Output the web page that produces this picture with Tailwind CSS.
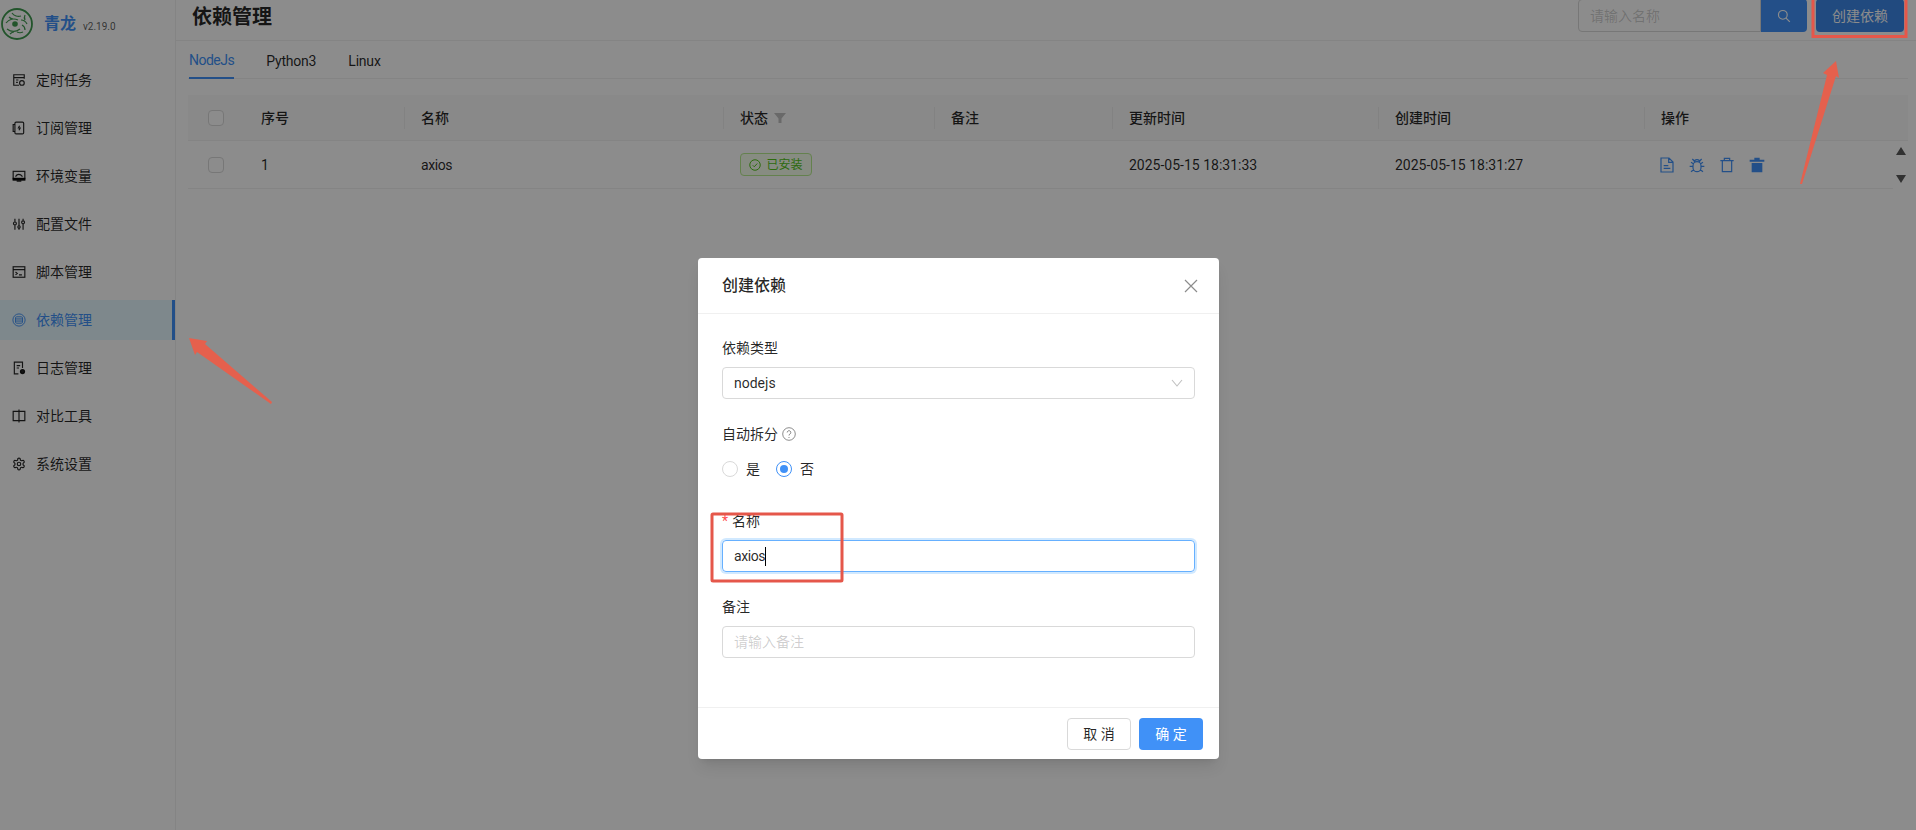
<!DOCTYPE html>
<html lang="zh-CN">
<head>
  <meta charset="UTF-8" />
  <title>依赖管理 | 青龙</title>
  <script src="https://cdn.jsdelivr.net/npm/@tailwindcss/browser@4"></script>
</head>
<body class="bg-white">
<div class="relative flex h-[830px] w-[1916px] overflow-hidden bg-white font-['Roboto','Noto_Sans_CJK_SC',sans-serif] text-sm text-black/85">

  <!-- Sidebar -->
  <aside class="h-full w-[176px] shrink-0 border-r border-[#f0f0f0]">
    <div class="flex h-[60px] items-start pt-2 pl-px">
      <svg viewBox="0 0 32 32" class="h-8 w-8 shrink-0" fill="none" stroke="#3f9a4f">
        <circle cx="16" cy="16" r="15" stroke-width="1.8"/>
        <circle cx="14" cy="16" r="2.8" fill="#3f9a4f" stroke="none"/>
        <path d="M5 15c3-4 8-5 12-3M6 21c4 3 9 3 13 0M11 5c2 3 6 4 9 3M20 12c3 0 5 2 6 4M21 17c2 1 3 3 3 5M16 24c2 1 4 1 6 0M8 9c1 1 2 2 4 2M9 26c1-1 2-2 4-2M24 7c-1 2-1 3 0 5" stroke-width="1.2"/>
      </svg>
      <span class="ml-[11px] mt-[6px] text-base leading-5 font-bold text-[#4091f7]">青龙</span>
      <span class="ml-[7px] mt-[12px] text-[10px] leading-[14px] text-black/65">v2.19.0</span>
    </div>
    <nav class="flex flex-col gap-2">
      <a class="flex h-10 items-center gap-[10px] pl-3"><svg viewBox="0 0 24 24" class="h-[14px] w-[14px]" fill="none" stroke="currentColor" stroke-width="2"><path d="M21 10V3H3v18h9M3 8h18M7 12h4M7 16h3"/><circle cx="17" cy="17" r="4"/></svg>定时任务</a>
      <a class="flex h-10 items-center gap-[10px] pl-3"><svg viewBox="0 0 24 24" class="h-[14px] w-[14px]" fill="none" stroke="currentColor" stroke-width="2"><rect x="5" y="2" width="15" height="20" rx="2"/><path d="M5 6H2v12h3M13 8l-2 4h3l-2 4"/></svg>订阅管理</a>
      <a class="flex h-10 items-center gap-[10px] pl-3"><svg viewBox="0 0 24 24" class="h-[14px] w-[14px]" fill="none" stroke="currentColor" stroke-width="2"><rect x="2" y="4" width="20" height="13"/><path d="M6 13c3-5 8-5 12 0"/><path d="M2 16h20v3H2zM8 21h8" fill="currentColor"/></svg>环境变量</a>
      <a class="flex h-10 items-center gap-[10px] pl-3"><svg viewBox="0 0 24 24" class="h-[14px] w-[14px]" fill="none" stroke="currentColor" stroke-width="2"><path d="M5 3v5M5 14v8M12 3v12M12 19v3M19 3v3M19 12v10"/><circle cx="5" cy="11" r="2.5"/><circle cx="12" cy="17" r="2"/><circle cx="19" cy="9" r="2.5"/></svg>配置文件</a>
      <a class="flex h-10 items-center gap-[10px] pl-3"><svg viewBox="0 0 24 24" class="h-[14px] w-[14px]" fill="none" stroke="currentColor" stroke-width="2"><rect x="2" y="3" width="20" height="18"/><path d="M2 8h20M6 12l3 2.5L6 17M12 17h5"/></svg>脚本管理</a>
      <a class="relative flex h-10 items-center gap-[10px] bg-[#e6f7ff] pl-3 text-[#4091f7]"><svg viewBox="0 0 24 24" class="h-[14px] w-[14px]" fill="none" stroke="currentColor" stroke-width="1.6"><circle cx="12" cy="12" r="10.5"/><rect x="6" y="6.500" width="12" height="11" rx="2"/><path d="M6.500 10.200h11M6.500 13.800h11"/></svg>依赖管理<span class="absolute top-0 right-0 h-10 w-[3px] bg-[#4091f7]"></span></a>
      <a class="flex h-10 items-center gap-[10px] pl-3"><svg viewBox="0 0 24 24" class="h-[14px] w-[14px]" fill="none" stroke="currentColor" stroke-width="2"><path d="M11 22H4V2h14v10M8 8h6M8 12h4"/><circle cx="18" cy="18" r="3.5" fill="currentColor"/></svg>日志管理</a>
      <a class="flex h-10 items-center gap-[10px] pl-3"><svg viewBox="0 0 24 24" class="h-[14px] w-[14px]" fill="none" stroke="currentColor" stroke-width="2"><path d="M2 4h20v16H2zM12 1v22M2 20h10"/></svg>对比工具</a>
      <a class="flex h-10 items-center gap-[10px] pl-3"><svg viewBox="0 0 24 24" class="h-[14px] w-[14px]" fill="none" stroke="currentColor" stroke-width="2"><path d="M12.22 2h-.44a2 2 0 0 0-2 2v.18a2 2 0 0 1-1 1.73l-.43.25a2 2 0 0 1-2 0l-.15-.08a2 2 0 0 0-2.73.73l-.22.38a2 2 0 0 0 .73 2.73l.15.1a2 2 0 0 1 1 1.72v.51a2 2 0 0 1-1 1.74l-.15.09a2 2 0 0 0-.73 2.73l.22.38a2 2 0 0 0 2.73.73l.15-.08a2 2 0 0 1 2 0l.43.25a2 2 0 0 1 1 1.73V20a2 2 0 0 0 2 2h.44a2 2 0 0 0 2-2v-.18a2 2 0 0 1 1-1.73l.43-.25a2 2 0 0 1 2 0l.15.08a2 2 0 0 0 2.73-.73l.22-.39a2 2 0 0 0-.73-2.73l-.15-.08a2 2 0 0 1-1-1.74v-.5a2 2 0 0 1 1-1.74l.15-.09a2 2 0 0 0 .73-2.73l-.22-.38a2 2 0 0 0-2.73-.73l-.15.08a2 2 0 0 1-2 0l-.43-.25a2 2 0 0 1-1-1.73V4a2 2 0 0 0-2-2z"/><circle cx="12" cy="12" r="3"/></svg>系统设置</a>
    </nav>
  </aside>

  <!-- Main -->
  <main class="flex-1">
    <header class="flex h-[41px] items-start justify-between border-b border-[#f0f0f0] pr-3 pl-4">
      <h1 class="pt-px text-xl leading-8 font-semibold">依赖管理</h1>
      <div class="flex">
        <input placeholder="请输入名称" class="-mt-px h-[33px] w-[183px] rounded-l-sm border border-[#d9d9d9] px-[11px] outline-none placeholder:text-black/20" />
        <button class="-mt-px mr-[9px] flex h-[33px] w-[46px] items-center justify-center rounded-r-sm bg-[#4091f7]">
          <svg viewBox="0 0 24 24" class="h-[14px] w-[14px]" fill="none" stroke="white" stroke-width="2"><circle cx="10" cy="10" r="7.5"/><path d="M15.5 15.5L22 22"/></svg>
        </button>
        <button class="-mt-px h-[33px] w-[88px] rounded-sm bg-[#3c88e8] text-white">创建依赖</button>
      </div>
    </header>

    <div class="pr-2 pl-3">
      <!-- Tabs -->
      <div class="flex h-[38px] gap-8 border-b border-[#f0f0f0] pl-px">
        <a class="-mb-px flex h-[38px] items-center border-b-2 border-[#4091f7] pt-px tracking-[-0.5px] text-[#4091f7]">NodeJs</a>
        <a class="flex h-[38px] items-center pt-px tracking-[-0.2px]">Python3</a>
        <a class="flex h-[38px] items-center pt-px tracking-[-0.2px]">Linux</a>
      </div>

      <!-- Table -->
      <div class="mt-4">
        <div class="grid h-[46px] grid-cols-[57px_160px_319px_211px_178px_266px_266px_1fr] items-center border-b border-[#f0f0f0] bg-[#fafafa] font-medium">
          <span class="ml-5 h-4 w-4 rounded-sm border border-[#d9d9d9] bg-white"></span>
          <span class="flex h-[22px] items-center border-r border-black/5 pl-4">序号</span>
          <span class="flex h-[22px] items-center border-r border-black/5 pl-4">名称</span>
          <span class="flex h-[22px] items-center gap-[6px] border-r border-black/5 pl-4">状态<svg viewBox="0 0 12 12" class="h-3 w-3" fill="#bfbfbf"><path d="M0 1h12L7.5 6.500V11h-3V6.500z"/></svg></span>
          <span class="flex h-[22px] items-center border-r border-black/5 pl-4">备注</span>
          <span class="flex h-[22px] items-center border-r border-black/5 pl-4">更新时间</span>
          <span class="flex h-[22px] items-center border-r border-black/5 pl-4">创建时间</span>
          <span class="flex h-[22px] items-center pl-4">操作</span>
        </div>
        <div class="flex h-[48px]">
          <div class="grid flex-1 grid-cols-[57px_160px_319px_211px_178px_266px_266px_1fr] items-center border-b border-[#f0f0f0]">
            <span class="ml-5 h-4 w-4 rounded-sm border border-[#d9d9d9] bg-white"></span>
            <span class="pl-4">1</span>
            <span class="pl-4 tracking-[-0.4px]">axios</span>
            <span class="pl-4">
              <span class="flex h-[23px] w-[72px] items-center justify-center gap-[5px] rounded-sm border border-[#b7eb8f] bg-[#f6ffed] text-xs text-[#52c41a]">
                <svg viewBox="0 0 24 24" class="h-3 w-3" fill="none" stroke="currentColor" stroke-width="2"><circle cx="12" cy="12" r="10.500"/><path d="M7.500 12.500l3 3 6-6.500"/></svg>已安装
              </span>
            </span>
            <span></span>
            <span class="pl-4">2025-05-15 18:31:33</span>
            <span class="pl-4">2025-05-15 18:31:27</span>
            <span class="flex items-center gap-[14px] pl-[14px] text-[#4091f7]">
              <svg viewBox="0 0 24 24" class="h-4 w-4" fill="none" stroke="currentColor" stroke-width="1.800"><path d="M3 1.500h12l6 6v15H3zM14.500 2v6H21M7 13h7M7 17h10"/></svg>
              <svg viewBox="0 0 24 24" class="h-4 w-4" fill="none" stroke="currentColor" stroke-width="1.800"><path d="M6 13a6 6 0 0 1 12 0v3a6 6 0 0 1-12 0zM8 8a4 4 0 0 1 8 0M8 6L5 3M16 6l3-3M6 14H1M18 14h5M7 19l-4 3M17 19l4 3M6.500 10L3 8M17.500 10l3.500-2"/></svg>
              <svg viewBox="0 0 24 24" class="h-4 w-4" fill="none" stroke="currentColor" stroke-width="1.800"><path d="M2 5.500h20M8 5.500V2h8v3.500M5 5.500V22h14V5.500"/></svg>
              <svg viewBox="0 0 24 24" class="h-4 w-4" fill="currentColor"><path d="M8 1h8v3h7v3H1V4h7zM4 9h16v14H4z"/></svg>
            </span>
          </div>
          <div class="flex w-[15px] flex-col items-center justify-between py-[6px]">
            <svg viewBox="0 0 10 8" class="h-2 w-[10px]" fill="#595959"><path d="M5 0l5 8H0z"/></svg>
            <svg viewBox="0 0 10 8" class="h-2 w-[10px]" fill="#595959"><path d="M5 8L0 0h10z"/></svg>
          </div>
        </div>
      </div>
    </div>
  </main>

  <!-- Mask -->
  <div class="absolute inset-0 bg-black/45"></div>

  <!-- Modal -->
  <section class="absolute top-[258px] left-[698px] flex h-[501px] w-[521px] flex-col rounded-sm bg-white shadow-lg">
    <div class="flex h-[56px] items-center justify-between border-b border-[#f0f0f0] pr-[21px] pl-6">
      <h2 class="text-base font-medium">创建依赖</h2>
      <svg viewBox="0 0 14 14" class="h-[14px] w-[14px]" fill="none" stroke="#000" stroke-opacity=".45" stroke-width="1.200"><path d="M1 1l12 12M13 1L1 13"/></svg>
    </div>
    <form class="flex-1 pt-[23px] pr-6 pl-6">
      <label class="block leading-[22px]">依赖类型</label>
      <div class="mt-2 flex h-8 items-center justify-between rounded-sm border border-[#d9d9d9] pr-[11px] pl-[11px]">
        nodejs
        <svg viewBox="0 0 12 8" class="h-2 w-3" fill="none" stroke="#000" stroke-opacity=".25" stroke-width="1.100"><path d="M1 1l5 6 5-6"/></svg>
      </div>
      <label class="mt-6 flex items-center gap-[4px] leading-[22px]">自动拆分
        <svg viewBox="0 0 14 14" class="h-[14px] w-[14px]" fill="none" stroke="#000" stroke-opacity=".45"><circle cx="7" cy="7" r="6.300"/><path d="M5.200 5.500a1.800 1.800 0 1 1 2.800 1.500c-.7.400-1 .7-1 1.500M7 10v1"/></svg>
      </label>
      <div class="mt-[13px] flex h-[22px] items-center">
        <span class="h-4 w-4 rounded-full border border-[#d9d9d9]"></span>
        <span class="ml-2">是</span>
        <span class="ml-4 flex h-4 w-4 items-center justify-center rounded-full border border-[#4091f7]"><span class="h-2 w-2 rounded-full bg-[#4091f7]"></span></span>
        <span class="ml-2">否</span>
      </div>
      <label class="mt-[30px] flex items-center leading-[22px]"><span class="mr-[4px] text-[#ff4d4f]">*</span>名称</label>
      <div class="mt-2 flex h-8 items-center rounded-sm border border-[#66b0ff] px-[11px] tracking-[-0.4px] shadow-[0_0_0_2px_rgba(24,144,255,0.2)]">axios<span class="h-[19px] w-px bg-black"></span></div>
      <label class="mt-6 block leading-[22px]">备注</label>
      <input placeholder="请输入备注" class="mt-2 h-8 w-full rounded-sm border border-[#d9d9d9] px-[11px] outline-none placeholder:text-black/20" />
    </form>
    <div class="flex h-[52px] items-center justify-end gap-2 border-t border-[#f0f0f0] pr-4">
      <button class="h-8 w-16 rounded-sm border border-[#d9d9d9]">取 消</button>
      <button class="h-8 w-16 rounded-sm bg-[#4091f7] text-white">确 定</button>
    </div>
  </section>

  <!-- Screenshot annotations -->
  <svg class="pointer-events-none absolute inset-0 h-[830px] w-[1916px]" viewBox="0 0 1916 830" fill="none">
    <path d="M189 338L207 341L205 344L272 402L271 404L197 352L195 355Z" fill="#e5604d"/>
    <path d="M1836 61L1839 78L1836 76L1802 184L1800 184L1827 75L1823 73Z" fill="#e5604d"/>
    <path d="M1813 -4V36.500H1906V-4" stroke="#e5574a" stroke-width="3"/>
    <rect x="712" y="514" width="130" height="67" rx="1" stroke="#e5574a" stroke-width="3"/>
  </svg>
</div>
</body>
</html>
